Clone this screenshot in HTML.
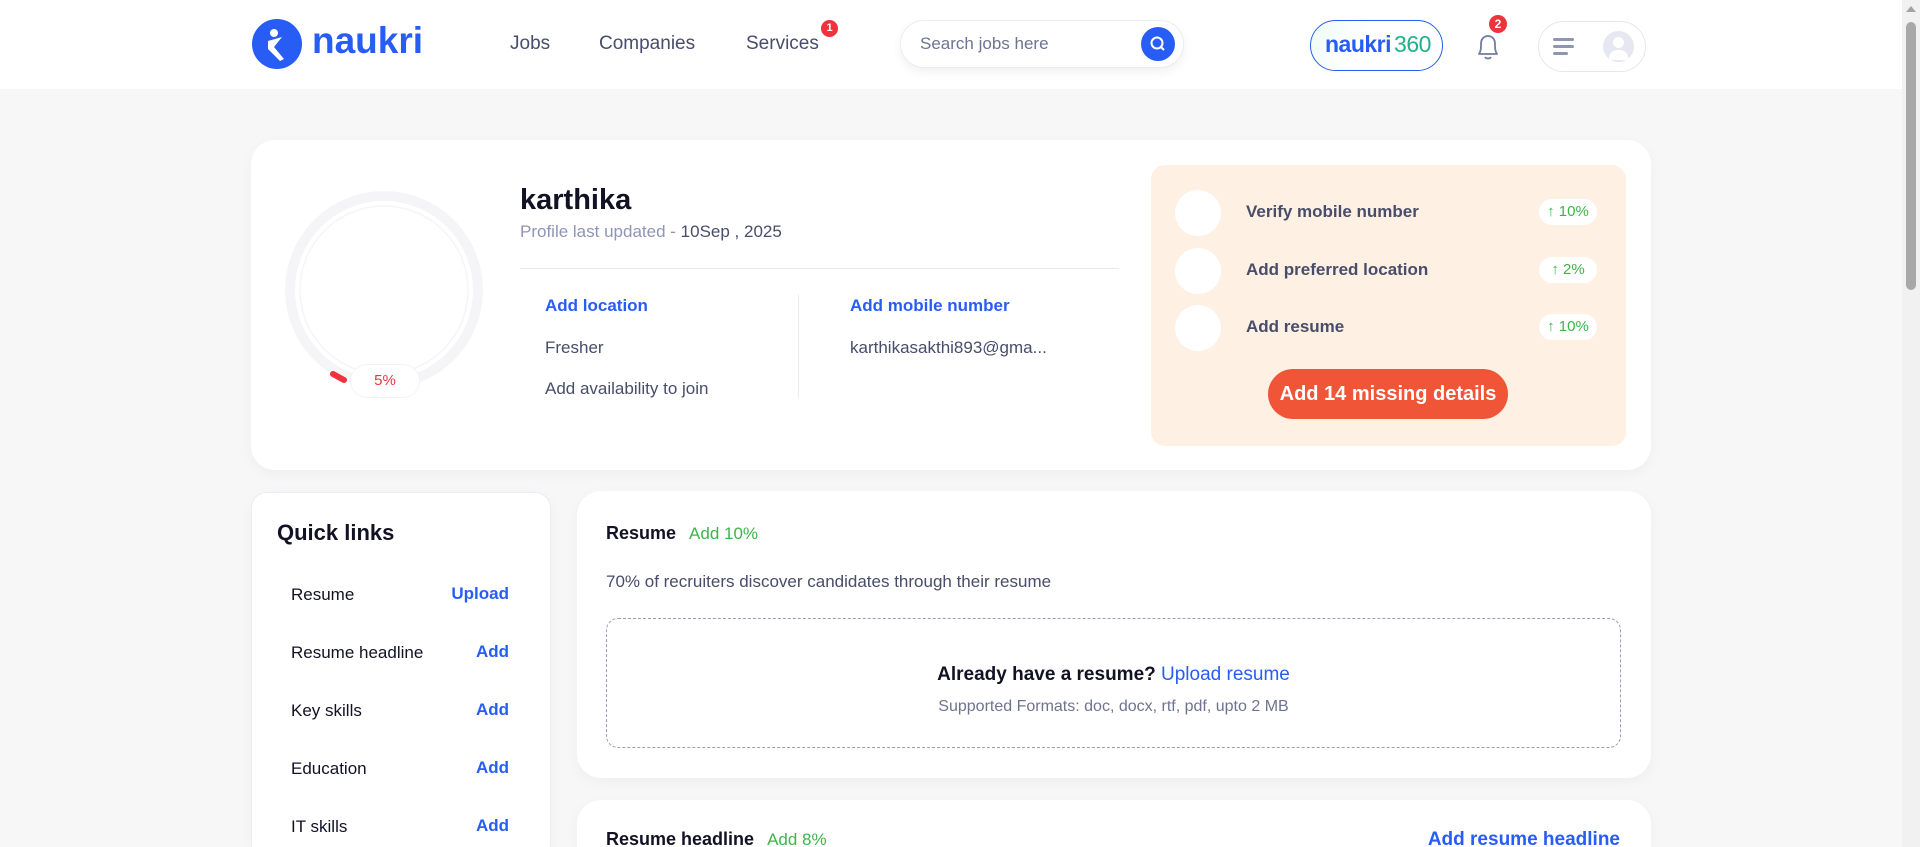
<!DOCTYPE html>
<html style="width:1920px;height:847px;overflow:hidden"><head><meta charset="utf-8"><style>
*{margin:0;padding:0;box-sizing:border-box}
body{width:1920px;height:847px;overflow:hidden;background:#f7f7f7;font-family:"Liberation Sans",Arial,sans-serif;color:#121224;position:relative}
.a{position:absolute;white-space:nowrap}
.hdr{position:absolute;left:0;top:0;width:1902px;height:89px;background:#fff}
.card{position:absolute;background:#fff;border-radius:24px;box-shadow:0 4px 14px rgba(0,0,0,.04)}
.blue{color:#275df5}
.grn{color:#3db54a}
.g{color:#474d6a}
.badge{position:absolute;background:#fff;border-radius:14px;width:58px;height:26px;color:#3db54a;font-size:15px;text-align:center;line-height:26px}
.wc{position:absolute;width:46px;height:46px;border-radius:50%;background:#fff;left:1175px}
.ql{font-size:17px;color:#121224}
.qa{font-size:17px;color:#275df5;font-weight:bold;right:1411px}
</style></head><body>
<div class="hdr"></div>
<svg class="a" style="left:252px;top:19px" width="50" height="50" viewBox="0 0 50 50"><circle cx="25" cy="25" r="25" fill="#275df5"/><circle cx="22" cy="14" r="4" fill="#fff"/><path d="M16 22 L30 18 L22 28 L32 40 L28 42 L16 30 Z" fill="#fff"/></svg>
<div class="a blue" style="left:312px;top:20px;font-size:37px;font-weight:bold">naukri</div>
<div class="a" style="left:510px;top:33px;font-size:19px;color:#474d6a">Jobs</div>
<div class="a" style="left:599px;top:33px;font-size:19px;color:#474d6a">Companies</div>
<div class="a" style="left:746px;top:33px;font-size:19px;color:#474d6a">Services</div>
<div class="a" style="left:821px;top:20px;width:17px;height:17px;border-radius:50%;background:#f0323c;color:#fff;font-size:11px;font-weight:bold;text-align:center;line-height:17px">1</div>
<div class="a" style="left:900px;top:20px;width:284px;height:48px;border-radius:24px;background:#fff;border:1px solid #ececf3;box-shadow:0 4px 10px rgba(0,0,0,.06)"></div>
<div class="a" style="left:920px;top:34px;font-size:17px;color:#6e7391">Search jobs here</div>
<div class="a" style="left:1141px;top:27px;width:34px;height:34px;border-radius:50%;background:#275df5"></div>
<svg class="a" style="left:1148px;top:34px" width="20" height="20" viewBox="0 0 20 20"><circle cx="9" cy="9" r="5.5" stroke="#fff" stroke-width="2" fill="none"/><path d="M13 13L16 16" stroke="#fff" stroke-width="2"/></svg>
<div class="a" style="left:1310px;top:20px;width:133px;height:51px;border-radius:26px;border:1px solid #275df5;background:linear-gradient(120deg,#eefbf7,#fff 40%)"></div>
<div class="a" style="left:1325px;top:31px;font-size:23px;font-weight:bold;color:#275df5;letter-spacing:-0.5px">naukri<span style="color:#1fb28a;font-weight:normal;margin-left:3px">360</span></div>
<svg class="a" style="left:1470px;top:28px" width="36" height="36" viewBox="0 0 36 36"><path d="M9 26 C11 23 11 20 11 16 C11 11 14 8 18 8 C22 8 25 11 25 16 C25 20 25 23 27 26 Z" fill="none" stroke="#717b9e" stroke-width="1.8" stroke-linejoin="round"/><path d="M15 29 C16 31 20 31 21 29" fill="none" stroke="#717b9e" stroke-width="1.8"/></svg>
<div class="a" style="left:1489px;top:15px;width:18px;height:18px;border-radius:50%;background:#f0323c;color:#fff;font-size:12px;font-weight:bold;text-align:center;line-height:18px">2</div>
<div class="a" style="left:1538px;top:21px;width:108px;height:51px;border-radius:26px;border:1px solid #e6e6ef;background:#fff"></div>
<div class="a" style="left:1553px;top:38px;width:21px;height:3px;background:#8f95b4;border-radius:2px"></div>
<div class="a" style="left:1553px;top:45px;width:21px;height:3px;background:#8f95b4;border-radius:2px"></div>
<div class="a" style="left:1553px;top:52px;width:15px;height:3px;background:#8f95b4;border-radius:2px"></div>
<div class="a" style="left:1603px;top:31px;width:31px;height:31px;border-radius:50%;background:#e7e7f1;overflow:hidden"><div style="position:absolute;left:10px;top:6px;width:11px;height:11px;border-radius:50%;background:#fff"></div><div style="position:absolute;left:6px;top:19px;width:19px;height:10px;border-radius:8px 8px 2px 2px;background:#fff"></div></div>
<div class="a" style="left:1902px;top:0;width:18px;height:847px;background:#f1f1f1"></div>
<div class="a" style="left:1906px;top:22px;width:10px;height:268px;background:#a8a8a8;border-radius:5px"></div>
<div class="a" style="left:1906px;top:6px;width:0;height:0;border-left:5px solid transparent;border-right:5px solid transparent;border-bottom:6px solid #a3a3a3"></div>

<div class="card" style="left:251px;top:140px;width:1400px;height:330px"></div>
<svg class="a" style="left:284px;top:190px" width="200" height="200" viewBox="0 0 200 200"><circle cx="100" cy="100" r="94" fill="none" stroke="#f5f5f7" stroke-width="10"/><circle cx="100" cy="100" r="84" fill="none" stroke="#f5f5f7" stroke-width="1.5"/><path d="M49 184 L60 190" stroke="#f0323c" stroke-width="6" stroke-linecap="round"/></svg>
<div class="a" style="left:350px;top:364px;width:70px;height:34px;border-radius:17px;background:#fff;border:1px solid #f3f3f5;color:#f0323c;font-size:15px;text-align:center;line-height:32px">5%</div>
<div class="a" style="left:520px;top:184px;font-size:29px;font-weight:bold">karthika</div>
<div class="a" style="left:520px;top:222px;font-size:17px;color:#8f95b4">Profile last updated - <span style="color:#474d6a">10Sep , 2025</span></div>
<div class="a" style="left:520px;top:268px;width:599px;height:1px;background:#e7e7f1"></div>
<div class="a blue" style="left:545px;top:296px;font-size:17px;font-weight:bold">Add location</div>
<div class="a g" style="left:545px;top:338px;font-size:17px">Fresher</div>
<div class="a g" style="left:545px;top:379px;font-size:17px">Add availability to join</div>
<div class="a" style="left:798px;top:294px;width:1px;height:104px;background:#ececf3"></div>
<div class="a blue" style="left:850px;top:296px;font-size:17px;font-weight:bold">Add mobile number</div>
<div class="a g" style="left:850px;top:338px;font-size:17px">karthikasakthi893@gma...</div>
<div class="a" style="left:1151px;top:165px;width:475px;height:281px;border-radius:14px;background:#fef0e2"></div>
<div class="wc" style="top:190px"></div><div class="wc" style="top:248px"></div><div class="wc" style="top:305px"></div>
<div class="a" style="left:1246px;top:202px;font-size:17px;font-weight:bold;color:#474d6a">Verify mobile number</div>
<div class="a" style="left:1246px;top:260px;font-size:17px;font-weight:bold;color:#474d6a">Add preferred location</div>
<div class="a" style="left:1246px;top:317px;font-size:17px;font-weight:bold;color:#474d6a">Add resume</div>
<div class="badge" style="left:1539px;top:199px">↑ 10%</div>
<div class="badge" style="left:1539px;top:257px">↑ 2%</div>
<div class="badge" style="left:1539px;top:314px">↑ 10%</div>
<div class="a" style="left:1268px;top:369px;width:240px;height:50px;border-radius:25px;background:#f05537;color:#fff;font-size:20px;font-weight:bold;text-align:center;line-height:50px">Add 14 missing details</div>

<div class="card" style="left:251px;top:492px;width:300px;height:355px;border:1px solid #ececf3;border-bottom:none;border-radius:16px 16px 0 0"></div>
<div class="a" style="left:277px;top:520px;font-size:22px;font-weight:bold">Quick links</div>
<div class="a ql" style="left:291px;top:585px">Resume</div><div class="a qa" style="top:584px">Upload</div>
<div class="a ql" style="left:291px;top:643px">Resume headline</div><div class="a qa" style="top:642px">Add</div>
<div class="a ql" style="left:291px;top:701px">Key skills</div><div class="a qa" style="top:700px">Add</div>
<div class="a ql" style="left:291px;top:759px">Education</div><div class="a qa" style="top:758px">Add</div>
<div class="a ql" style="left:291px;top:817px">IT skills</div><div class="a qa" style="top:816px">Add</div>

<div class="card" style="left:577px;top:491px;width:1074px;height:287px"></div>
<div class="a" style="left:606px;top:523px;font-size:18px;font-weight:bold">Resume <span class="grn" style="font-weight:normal;font-size:17px;margin-left:8px">Add 10%</span></div>
<div class="a g" style="left:606px;top:572px;font-size:17px">70% of recruiters discover candidates through their resume</div>
<div class="a" style="left:606px;top:618px;width:1015px;height:130px;border:1px dashed #9a9cc0;border-radius:12px"></div>
<div class="a" style="left:606px;top:664px;width:1015px;text-align:center;font-size:19px;font-weight:bold">Already have a resume? <span class="blue" style="font-weight:normal">Upload resume</span></div>
<div class="a" style="left:606px;top:698px;width:1015px;text-align:center;font-size:16px;color:#6e7391">Supported Formats: doc, docx, rtf, pdf, upto 2 MB</div>

<div class="card" style="left:577px;top:800px;width:1074px;height:47px;border-radius:24px 24px 0 0"></div>
<div class="a" style="left:606px;top:829px;font-size:18px;font-weight:bold">Resume headline <span class="grn" style="font-weight:normal;font-size:17px;margin-left:8px">Add 8%</span></div>
<div class="a blue" style="right:300px;top:829px;font-size:19px;font-weight:bold">Add resume headline</div>
</body></html>
